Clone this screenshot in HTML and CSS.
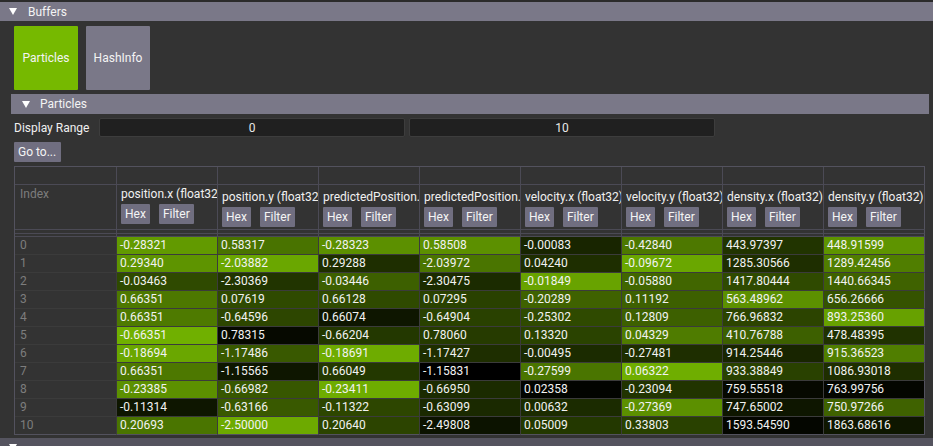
FILE: index.html
```html
<!DOCTYPE html>
<html>
<head>
<meta charset="utf-8">
<link rel="stylesheet" href="styles.css">
</head>
<body>
<div class="app">
  <div class="hdr hdr-top"><span class="tri"></span><span>Buffers</span></div>
  <div class="tabs">
    <button class="tab tab-active">Particles</button>
    <button class="tab">HashInfo</button>
  </div>
  <div class="hdr hdr-sub"><span class="tri"></span><span>Particles</span></div>
  <div class="range">
    <span class="range-label">Display Range</span>
    <div class="range-input">0</div>
    <div class="range-input">10</div>
  </div>
  <div class="goto-row"><button class="btn goto">Go to...</button></div>
  <div class="table" id="tbl"></div>
  <div class="hdr hdr-bottom"><span class="tri"></span></div>
</div>
<script src="app.js"></script>
</body>
</html>
```

FILE: styles.css
```css
html, body {
  margin: 0;
  padding: 0;
}
body {
  background: #333333;
  font-family: Roboto, "Liberation Sans", sans-serif;
  font-size: 12px;
  color: #f0f0f0;
  width: 933px;
  height: 446px;
  overflow: hidden;
}
.app {
  border-top: 2px solid #2b2b2b;
}
.hdr {
  height: 19px;
  background: #7a7888;
  display: flex;
  align-items: center;
  color: #f4f4f4;
}
.hdr-top {
  padding-left: 9px;
  gap: 11px;
}
.tri {
  width: 0;
  height: 0;
  border-left: 4px solid transparent;
  border-right: 4px solid transparent;
  border-top: 7px solid #ffffff;
}
.tabs {
  display: flex;
  gap: 8px;
  margin: 5px 0 4px 14px;
}
.tab {
  width: 64px;
  height: 64px;
  border: 0;
  border-radius: 1px;
  background: #7a7888;
  color: #f4f4f4;
  font: inherit;
  padding: 0;
}
.tab-active {
  background: #76b900;
}
.hdr-sub {
  margin: 0 4px 0 11px;
  height: 20px;
  padding-left: 11px;
  gap: 10px;
}
.range {
  display: flex;
  align-items: center;
  margin: 4px 0 0 14px;
  height: 19px;
}
.range-label {
  width: 85px;
  flex: none;
}
.range-input {
  width: 306px;
  height: 19px;
  box-sizing: border-box;
  background: #202020;
  border: 1px solid #3d3d3d;
  border-radius: 2px;
  display: flex;
  align-items: center;
  justify-content: center;
  color: #e8e8e8;
}
.range-input + .range-input {
  margin-left: 4px;
}
.goto-row {
  margin: 5px 0 4px 14px;
  height: 20px;
}
.btn {
  display: block;
  border: 0;
  border-radius: 1px;
  background: #706e80;
  color: #f4f4f4;
  font: inherit;
  padding: 0 4px;
  height: 20px;
}
.goto {
  width: 47px;
  text-align: left;
}
.table {
  display: grid;
  grid-template-columns: 102px repeat(8, 101px);
  border-left: 1px solid #53525e;
  border-top: 1px solid #53525e;
  margin-left: 14px;
  width: max-content;
}
.cell {
  box-sizing: border-box;
  border-right: 1px solid #4b4a55;
  border-bottom: 1px solid #4b4a55;
  overflow: hidden;
  white-space: nowrap;
}
.cell-last {
  border-right-color: #53525e;
}
.row-a {
  height: 18px;
}
.head {
  height: 45px;
  padding: 5px 0 0 4px;
}
.head-first {
  padding-top: 2px;
}
.head-index {
  padding: 2px 0 0 5px;
  color: #7d7d7d;
}
.hname {
  line-height: 14px;
  height: 14px;
  overflow: hidden;
}
.hbtns {
  display: flex;
  gap: 9px;
  margin-top: 3px;
}
.hbtns .btn {
  display: flex;
  align-items: center;
}
.spacer1 {
  height: 4px;
}
.spacer2 {
  height: 3px;
}
.data {
  height: 18px;
  line-height: 17px;
  padding-left: 3px;
  color: #f2f2f2;
  border-bottom-color: #3b3b3b;
  border-right-color: #3b3b3b;
}
.data.cell-last {
  border-right-color: #53525e;
}
.idx {
  padding-left: 5px;
  color: #7d7d7d;
}
.data-lastrow {
  border-bottom-color: #53525e;
}
.hdr-bottom {
  margin-top: 3px;
  background: #55545f;
  padding-left: 9px;
}
```

FILE: app.js
```js
(function () {
  var cols = [
    "position.x (float32)",
    "position.y (float32)",
    "predictedPosition.x (float32)",
    "predictedPosition.y (float32)",
    "velocity.x (float32)",
    "velocity.y (float32)",
    "density.x (float32)",
    "density.y (float32)"
  ];
  var vals = [
    ["-0.28321","0.29340","-0.03463","0.66351","0.66351","-0.66351","-0.18694","0.66351","-0.23385","-0.11314","0.20693"],
    ["0.58317","-2.03882","-2.30369","0.07619","-0.64596","0.78315","-1.17486","-1.15565","-0.66982","-0.63166","-2.50000"],
    ["-0.28323","0.29288","-0.03446","0.66128","0.66074","-0.66204","-0.18691","0.66049","-0.23411","-0.11322","0.20640"],
    ["0.58508","-2.03972","-2.30475","0.07295","-0.64904","0.78060","-1.17427","-1.15831","-0.66950","-0.63099","-2.49808"],
    ["-0.00083","0.04240","-0.01849","-0.20289","-0.25302","0.13320","-0.00495","-0.27599","0.02358","0.00632","0.05009"],
    ["-0.42840","-0.09672","-0.05880","0.11192","0.12809","0.04329","-0.27481","0.06322","-0.23094","-0.27369","0.33803"],
    ["443.97397","1285.30566","1417.80444","563.48962","766.96832","410.76788","914.25446","933.38849","759.55518","747.65002","1593.54590"],
    ["448.91599","1289.42456","1440.66345","656.26666","893.25360","478.48395","915.36523","1086.93018","763.99756","750.97266","1863.68616"]
  ];
  var ts = [
    [0.83,0.80,0.40,0.65,0.66,0.95,0.90,0.65,0.78,0.12,0.63],
    [0.62,0.90,0.28,0.40,0.38,0.05,0.48,0.12,0.47,0.48,0.92],
    [0.78,0.25,0.52,0.40,0.12,0.30,0.93,0.30,0.93,0.38,0.37],
    [0.78,0.63,0.23,0.35,0.35,0.32,0.25,0.00,0.23,0.22,0.10],
    [0.20,0.25,0.88,0.53,0.40,0.36,0.23,0.63,0.02,0.23,0.30],
    [0.65,0.90,0.55,0.52,0.52,0.67,0.25,0.94,0.28,0.78,0.35],
    [0.28,0.25,0.40,0.78,0.37,0.52,0.20,0.35,0.05,0.12,0.03],
    [0.80,0.68,0.53,0.45,0.87,0.27,0.68,0.25,0.03,0.53,0.12]
  ];
  var tbl = document.getElementById("tbl");
  function cell(cls, html) {
    var d = document.createElement("div");
    d.className = "cell " + cls;
    if (html) d.innerHTML = html;
    tbl.appendChild(d);
    return d;
  }
  var c, r;
  for (c = 0; c < 9; c++) cell("row-a" + (c === 8 ? " cell-last" : ""));
  cell("head head-index", '<div class="hname">Index</div>');
  for (c = 0; c < 8; c++) {
    cell("head" + (c === 0 ? " head-first" : "") + (c === 7 ? " cell-last" : ""),
      '<div class="hname">' + cols[c] + '</div><div class="hbtns"><span class="btn">Hex</span><span class="btn">Filter</span></div>');
  }
  for (c = 0; c < 9; c++) cell("spacer1" + (c === 8 ? " cell-last" : ""));
  for (c = 0; c < 9; c++) cell("spacer2" + (c === 8 ? " cell-last" : ""));
  for (r = 0; r < 11; r++) {
    var last = r === 10 ? " data-lastrow" : "";
    cell("data idx" + last, String(r));
    for (c = 0; c < 8; c++) {
      var t = ts[c][r];
      var d = cell("data" + last + (c === 7 ? " cell-last" : ""), vals[c][r]);
      d.style.backgroundColor = "rgb(" + Math.round(118 * t) + "," + Math.round(185 * t) + ",0)";
    }
  }
})();
```
